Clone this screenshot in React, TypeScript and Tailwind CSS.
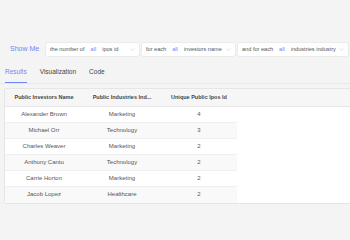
import { ChevronDown } from "lucide-react";

const rows = [
  { name: "Alexander Brown", industry: "Marketing", count: 4 },
  { name: "Michael Orr", industry: "Technology", count: 3 },
  { name: "Charles Weaver", industry: "Marketing", count: 2 },
  { name: "Anthony Cantu", industry: "Technology", count: 2 },
  { name: "Carrie Horton", industry: "Marketing", count: 2 },
  { name: "Jacob Lopez", industry: "Healthcare", count: 2 },
];

function FilterBox({ label, field, width }: { label: string; field: string; width: string }) {
  return (
    <div className={`${width} h-[15px] bg-white rounded-[3px] border border-[#ebebeb] flex items-center pl-[4px] pr-[3px] text-[5.6px] text-[#555] whitespace-nowrap`}>
      <span>{label}</span>
      <span className="ml-[6px] text-[#6d87f2]">all</span>
      <span className="ml-[6px] flex-1 overflow-hidden">{field}</span>
      <ChevronDown className="w-[7px] h-[7px] text-[#bbb] shrink-0" strokeWidth={1.5} />
    </div>
  );
}

export default function App() {
  return (
    <div className="w-[350px] h-[240px] overflow-hidden bg-[#f4f4f4] pt-[42px]" style={{ fontFamily: '"Liberation Sans", Arial, sans-serif' }}>
      {/* Filter row */}
      <div className="flex items-center">
        <span className="w-[45px] pl-[10px] text-[7px] text-[#6d87f2] whitespace-nowrap">Show Me</span>
        <div className="flex gap-[1px]">
          <FilterBox label="the number of" field="ipos id" width="w-[95px]" />
          <FilterBox label="for each" field="investors name" width="w-[95px]" />
          <FilterBox label="and for each" field="industries industry" width="w-[112px]" />
        </div>
      </div>

      {/* Tabs */}
      <div className="mt-[10px] flex gap-[13px] px-[5px] border-b border-[#e8e8e8] text-[6.5px] text-[#444]">
        <span className="text-[#6d87f2] border-b-[1.5px] border-[#6d87f2] pb-[5px]">Results</span>
        <span className="pb-[5px]">Visualization</span>
        <span className="pb-[5px]">Code</span>
      </div>

      {/* Results table */}
      <div className="ml-[4px] mt-[4px] w-[360px] bg-white border border-[#e6e6e6] rounded-[2px]">
        <div className="flex h-[18px] items-center bg-[#f6f6f6] border-b border-[#e8e8e8] text-[5.5px] font-semibold text-[#444]">
          <span className="w-[78px] text-center">Public Investors Name</span>
          <span className="w-[78px] text-center truncate px-[6px]">Public Industries Ind...</span>
          <span className="w-[76px] text-center">Unique Public Ipos Id</span>
        </div>
        {rows.map((r, i) => (
          <div
            key={r.name}
            className={`flex h-[16px] w-[232px] items-center text-[6px] text-[#555] ${i % 2 === 1 ? "bg-[#f9f9f9]" : "bg-white"} ${i < rows.length - 1 ? "border-b border-[#f0f0f0]" : ""}`}
          >
            <span className="w-[78px] text-center">{r.name}</span>
            <span className="w-[78px] text-center">{r.industry}</span>
            <span className="w-[76px] text-center text-[#555]">{r.count}</span>
          </div>
        ))}
      </div>
    </div>
  );
}
